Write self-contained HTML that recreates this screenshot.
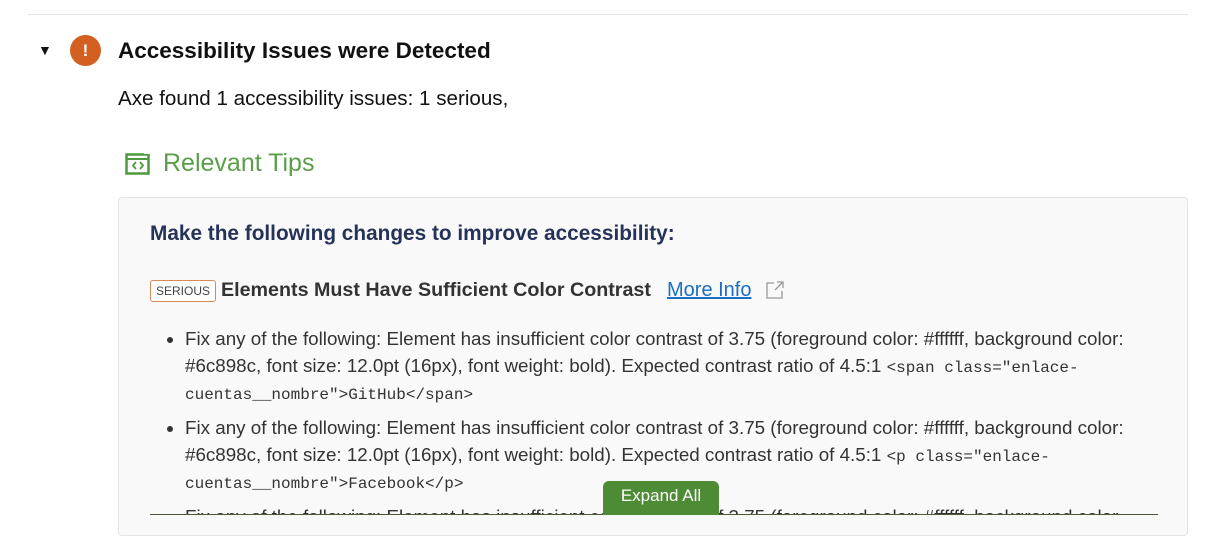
<!DOCTYPE html>
<html><head><style>
body{margin:0;width:1215px;height:551px;background:#fff;font-family:"Liberation Sans",sans-serif;position:relative;overflow:hidden;color:#111}
.hr{position:absolute;left:28px;top:14px;width:1160px;height:1px;background:#e6e6e6}
.tri{position:absolute;left:38px;top:42px;font-size:14px}
.ic{position:absolute;left:70px;top:35px;width:31px;height:31px;border-radius:50%;background:#d35f20;color:#fff;font-weight:bold;text-align:center;line-height:31px;font-size:17px}
h1{position:absolute;left:118px;top:38px;margin:0;font-size:22.5px;font-weight:bold;color:#111}
.sub{position:absolute;left:118px;top:87px;font-size:20.6px;color:#111}
.tips{position:absolute;left:163px;top:149px;font-size:25px;color:#5a9e4a}
.box{position:absolute;left:118px;top:197px;width:1068px;height:337px;background:#f9f9f9;border:1px solid #e4e4e4;border-radius:4px;overflow:hidden}
.h2{position:absolute;left:31px;top:24px;font-size:20.8px;font-weight:bold;color:#25335a}
.badge{position:absolute;left:31px;top:82px;border:1px solid #d88a5a;border-radius:3px;font-size:12px;padding:3px 5px;color:#444;background:#fff}
.rule{position:absolute;left:102px;top:81px;font-size:19.7px;font-weight:bold;color:#333}
.more{position:absolute;left:548px;top:81px;font-size:20px;color:#1a6fc2;text-decoration:underline}
ul{position:absolute;left:48px;top:127px;margin:0;padding:0 0 0 18px;width:990px;font-size:18.8px;color:#333;line-height:27px}
li{margin-bottom:8px;line-height:27px}
code{font-family:"Liberation Mono",monospace;font-size:16px;line-height:10px}
.line{position:absolute;left:31px;top:316px;width:1008px;height:1px;background:#4a5a3a}
.btn{position:absolute;left:484px;top:283px;width:116px;height:34px;background:#4d8b35;color:#fff;border-radius:6px 6px 0 0;text-align:center;line-height:30px;font-size:17px}
.cov{position:absolute;left:0;top:317px;width:1068px;height:30px;background:#f9f9f9}
</style></head><body>
<div class="hr"></div>
<div class="tri">▼</div>
<div class="ic">!</div>
<h1>Accessibility Issues were Detected</h1>
<div class="sub">Axe found 1 accessibility issues: 1 serious,</div>
<svg style="position:absolute;left:125px;top:152px" width="27" height="24" viewBox="0 0 27 24"><rect x="1.5" y="2.5" width="22" height="19" fill="none" stroke="#4d9a3e" stroke-width="2.5"/><line x1="1.5" y1="7" x2="23.5" y2="7" stroke="#4d9a3e" stroke-width="2"/><path d="M11 10l-3 3.5 3 3.5M15 10l3 3.5-3 3.5" fill="none" stroke="#4d9a3e" stroke-width="1.8"/><path d="M19 1h7v7" fill="none" stroke="#fff" stroke-width="2"/></svg>
<div class="tips">Relevant Tips</div>
<div class="box">
<div class="h2">Make the following changes to improve accessibility:</div>
<div class="badge">SERIOUS</div>
<div class="rule">Elements Must Have Sufficient Color Contrast</div>
<div class="more">More Info</div>
<svg style="position:absolute;left:646px;top:82px" width="20" height="20" viewBox="0 0 20 20"><path d="M9 3H2v15h15v-7M12 2h6v6M18 2l-8 8" fill="none" stroke="#999" stroke-width="1.3"/></svg>
<ul>
<li>Fix any of the following: Element has insufficient color contrast of 3.75 (foreground color: #ffffff, background color: #6c898c, font size: 12.0pt (16px), font weight: bold). Expected contrast ratio of 4.5:1 <code>&lt;span class="enlace-cuentas__nombre"&gt;GitHub&lt;/span&gt;</code></li>
<li>Fix any of the following: Element has insufficient color contrast of 3.75 (foreground color: #ffffff, background color: #6c898c, font size: 12.0pt (16px), font weight: bold). Expected contrast ratio of 4.5:1 <code>&lt;p class="enlace-cuentas__nombre"&gt;Facebook&lt;/p&gt;</code></li>
<li>Fix any of the following: Element has insufficient color contrast of 3.75 (foreground color: #ffffff, background color</li>
</ul>
<div class="cov"></div>
<div class="line"></div>
<div class="btn">Expand All</div>
</div>
</body></html>
